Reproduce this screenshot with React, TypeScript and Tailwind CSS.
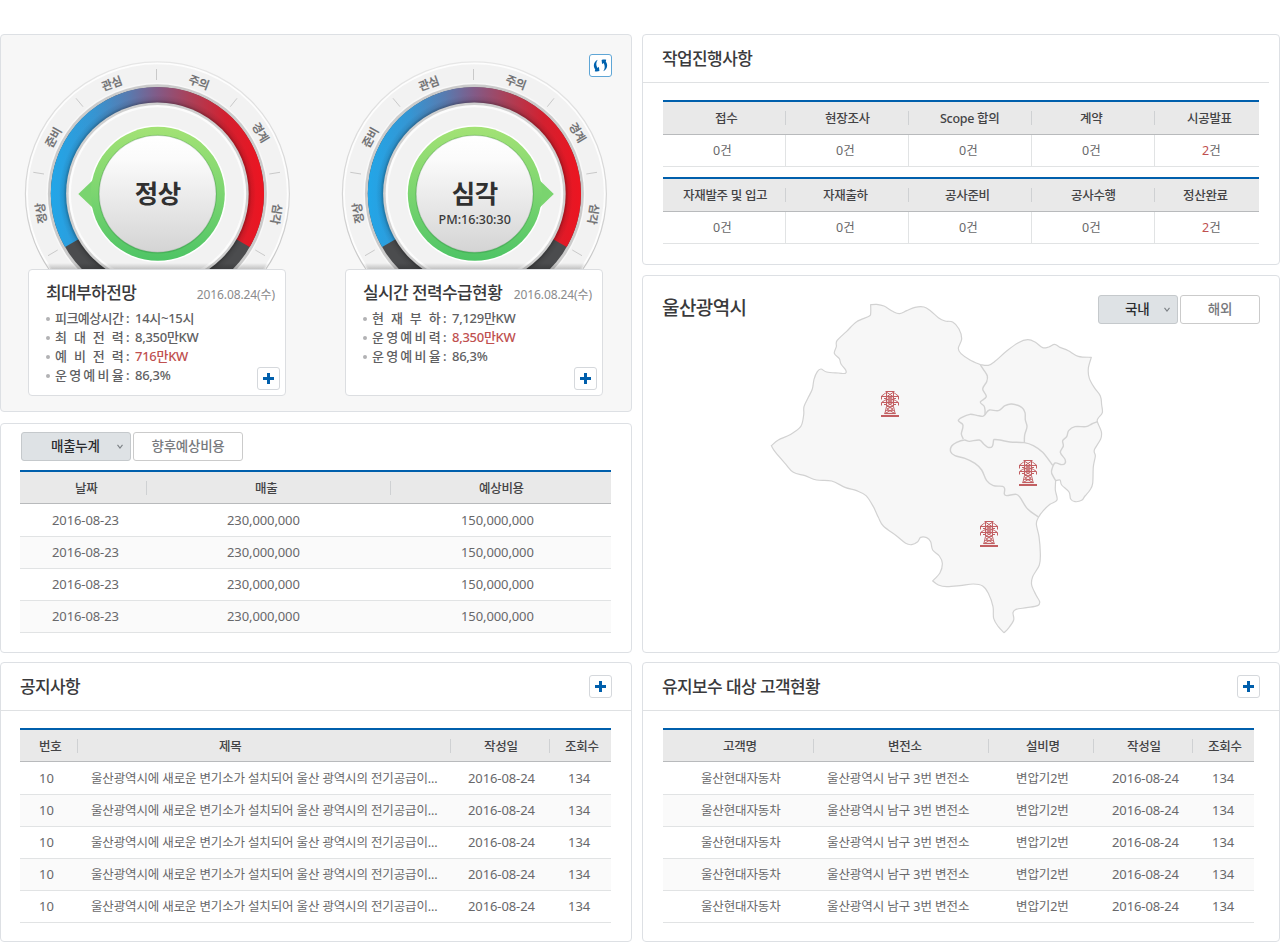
import React from "react";

type Pt = [number, number];

const PANEL = "rounded-[4px] border border-[#dde0e4] bg-white";

/* ---------- small pieces ---------- */

function PlusButton({ className = "" }: { className?: string }) {
  return (
    <button
      className={`flex h-[23px] w-[23px] items-center justify-center rounded-[3px] border border-[#d5d8dc] bg-white ${className}`}
    >
      <svg width="11" height="11" viewBox="0 0 11 11" shapeRendering="crispEdges">
        <path d="M4 0h3v4h4v3H7v4H4V7H0V4h4z" fill="#005fac" />
      </svg>
    </button>
  );
}

function RefreshButton() {
  return (
    <button className="flex h-[23px] w-[23px] shrink-0 items-center justify-center rounded-[3px] border border-[#5fa6d6] bg-white">
      <svg width="15" height="15" viewBox="0 0 15 15" fill="#0062ae">
        <path d="M4.800 1.800C.400 3.600-.100 8.700 2.200 11.300L1.800 13.300C3.500 13.600 5.200 13.500 6.400 13L5.900 8.800 4.600 9.900C2.900 7.800 2.800 4.300 4.800 1.800z" />
        <path d="M10.200 13.200C14.600 11.400 15.100 6.300 12.800 3.700L13.200 1.700C11.500 1.400 9.800 1.500 8.600 2L9.100 6.200 10.400 5.100C12.100 7.200 12.200 10.700 10.200 13.200z" />
      </svg>
    </button>
  );
}

function Toggle({ on, off, width, onPad }: { on: string; off: string; width: string; onPad: string }) {
  return (
    <div className="flex gap-[2px] text-[13.5px] leading-none font-medium tracking-[-0.25px]">
      <button className={`${width} ${onPad} flex h-[29px] items-center justify-between rounded-[3px] border border-[#c5c9cc] bg-[#dee2e5] pr-[7px] text-[#2a2c2f]`}>
        <span>{on}</span>
        <svg width="6" height="5" viewBox="0 0 6 5" fill="none" stroke="#7c8085" strokeWidth="1.1">
          <path d="M.5.8 3 4 5.500.8" />
        </svg>
      </button>
      <button className={`${width} flex h-[29px] items-center justify-center rounded-[3px] border border-[#cbcbcb] bg-white text-[#77797d]`}>
        {off}
      </button>
    </div>
  );
}

/* ---------- gauges ---------- */

const CX = 157.4;
const CY = 193.8;

const TICKS: [number, number, number, number][] = [
  [156.5, 69, 156.5, 80],
  [76, 98.3, 83, 106.7],
  [33.3, 172.3, 44, 174],
  [48, 255.7, 57.7, 250],
  [237, 98.3, 230.3, 106.7],
  [280, 172.3, 269.3, 174],
  [265, 255.7, 255.3, 250],
];

const LABELS: [string, number, number, number][] = [
  ["정상", 41, 213.3, -99],
  ["준비", 53.2, 137.3, -61],
  ["관심", 111.7, 83.5, -20],
  ["주의", 199, 82.3, 20],
  ["경계", 260.5, 132.3, 59],
  ["심각", 276.5, 214, 99],
];

function Gauge({ id, label, time, pointer }: { id: string; label: string; time?: string; pointer: "left" | "right" }) {
  return (
    <svg className="-mx-[5px] block" width="268" height="210" viewBox="23 59 268 210">
      <defs>
        <linearGradient id={`${id}-scale`} gradientUnits="userSpaceOnUse" x1="51" y1="0" x2="265" y2="0">
          <stop offset="0" stopColor="#22a6e8" />
          <stop offset="0.2" stopColor="#3695d2" />
          <stop offset="0.36" stopColor="#587bb0" />
          <stop offset="0.5" stopColor="#835a86" />
          <stop offset="0.65" stopColor="#ab4058" />
          <stop offset="0.82" stopColor="#d3202f" />
          <stop offset="1" stopColor="#ee1420" />
        </linearGradient>
        <linearGradient id={`${id}-green`} x1="0" y1="0" x2="0" y2="1">
          <stop offset="0" stopColor="#a3e275" />
          <stop offset="0.5" stopColor="#7bd570" />
          <stop offset="1" stopColor="#4ec465" />
        </linearGradient>
        <linearGradient id={`${id}-face`} x1="0" y1="0" x2="0" y2="1">
          <stop offset="0" stopColor="#ffffff" />
          <stop offset="0.2" stopColor="#fbfbfb" />
          <stop offset="1" stopColor="#d4d4d4" />
        </linearGradient>
        <linearGradient id={`${id}-rim`} x1="0" y1="0" x2="0" y2="1">
          <stop offset="0" stopColor="#e6e6e6" />
          <stop offset="0.6" stopColor="#d2d2d2" />
          <stop offset="1" stopColor="#b8b8b8" />
        </linearGradient>
        <linearGradient id={`${id}-edge`} x1="0" y1="0" x2="0" y2="1">
          <stop offset="0" stopColor="#000" stopOpacity="0" />
          <stop offset="1" stopColor="#000" stopOpacity="0.28" />
        </linearGradient>
        <radialGradient id={`${id}-inset`} gradientUnits="userSpaceOnUse" cx={CX} cy={CY} r="107">
          <stop offset="0.85" stopColor="#000" stopOpacity="0.3" />
          <stop offset="0.88" stopColor="#000" stopOpacity="0.08" />
          <stop offset="0.92" stopColor="#000" stopOpacity="0" />
        </radialGradient>
        <clipPath id={`${id}-clip`}>
          <circle cx={CX} cy={CY} r="131" />
        </clipPath>
      </defs>

      <circle cx={CX} cy={CY} r="132" fill="#fdfdfd" stroke={`url(#${id}-rim)`} strokeWidth="1.2" />
      <circle cx={CX} cy={CY} r="129.500" fill="#f2f2f2" />
      <circle cx={CX} cy={CY} r="111" fill="#f8f8f8" />
      <circle cx={CX} cy={CY} r="109.500" fill="#cbcbcb" />
      <circle cx={CX} cy={CY} r="106.600" fill="#4b4c4e" />
      <path d={`M${CX} ${CY}L65.100 247A106.600 106.600 0 1 1 249.700 247Z`} fill={`url(#${id}-scale)`} />
      <circle cx={CX} cy={CY} r="106.600" fill={`url(#${id}-inset)`} />
      <circle cx={CX} cy={CY} r="91.300" fill="#d0d0d0" />
      <circle cx={CX} cy={CY} r="88.800" fill="#fcfcfc" />
      <circle cx={CX} cy={CY} r="86.500" fill="#f2f2f2" />

      {TICKS.map(([x1, y1, x2, y2], i) => (
        <line key={i} x1={x1} y1={y1} x2={x2} y2={y2} stroke="#c9c9c9" strokeWidth="1" />
      ))}
      {LABELS.map(([t, x, y, r]) => (
        <text
          key={t}
          transform={`translate(${x} ${y}) rotate(${r})`}
          textAnchor="middle"
          y="4.300"
          fontSize="11.500"
          fontWeight="500"
          letterSpacing="-0.3"
          fill="#6d6d6f"
          stroke="#6d6d6f"
          strokeWidth="0.25"
        >
          {t}
        </text>
      ))}

      <circle cx={CX + 0.4} cy={CY} r="68.500" fill="#fff" />
      {pointer === "left" ? (
        <path d="M78.300 194 93 180V208Z" fill="#7ad46f" />
      ) : (
        <path d="M236.800 194 222.300 180V208Z" fill="#7ad46f" />
      )}
      <circle cx={CX + 0.4} cy={CY} r="67" fill={`url(#${id}-green)`} />
      <circle cx={CX + 0.2} cy={CY + 0.300} r="59.300" fill="#1f7a35" fillOpacity="0.25" />
      <circle cx={CX + 0.2} cy={CY} r="58.400" fill={`url(#${id}-face)`} stroke="#6b8f6b" strokeOpacity="0.35" strokeWidth="0.7" />
      <text x={CX + 0.300} y="202.500" textAnchor="middle" fontSize="25.500" fontWeight="700" letterSpacing="-0.500" fill="#303030">
        {label}
      </text>
      {time && (
        <text x={CX + 0.300} y="223.500" textAnchor="middle" fontSize="12.500" fontWeight="500" fill="#3a3a3a">
          {time}
        </text>
      )}
      <rect x="29" y="263" width="257" height="6" fill={`url(#${id}-edge)`} fillOpacity="0.700" clipPath={`url(#${id}-clip)`} />
    </svg>
  );
}

type Stat = { label: string; value: string; hot?: boolean };

function StatCard({ title, date, rows }: { title: string; date: string; rows: Stat[] }) {
  return (
    <div className="flex h-[127px] w-[258px] flex-col rounded-[4px] border border-[#dcdee1] bg-white">
      <div className="flex h-[39px] items-center justify-between pt-[6px] pr-[10px] pl-[17px]">
        <h3 className="text-[17px] leading-none font-medium tracking-[-0.6px] whitespace-nowrap text-[#3a3a3c]">{title}</h3>
        <span className="pt-[5px] text-[12px] leading-none tracking-[-0.1px] text-[#8a8a8c]">{date}</span>
      </div>
      <div className="flex min-h-0 flex-1 justify-between pr-[5px] pl-[17px]">
        <ul className="text-[13px] leading-none font-medium text-[#606062]">
          {rows.map((r) => (
            <li key={r.label} className="flex h-[19px] items-center">
              <span className="mr-[5px] h-[4px] w-[4px] rounded-full bg-[#b2b2b4]" />
              <span className="flex w-[68px] justify-between tracking-[-0.6px]">
                {r.label.split("").map((c, i) => (
                  <span key={i}>{c}</span>
                ))}
              </span>
              <span className="w-[12px] pl-[3px]">:</span>
              <span className={r.hot ? "tracking-[-0.28px] text-[#c0504f]" : "tracking-[-0.28px]"}>{r.value}</span>
            </li>
          ))}
        </ul>
        <PlusButton className="mb-[5px] self-end" />
      </div>
    </div>
  );
}

/* ---------- tables ---------- */

type Col = { w: string; head: string; headPad: string; bodyPad: string; body: string };

function DataTable({ cols, count }: { cols: Col[]; count: number }) {
  return (
    <div className="w-[591px] text-[13px] leading-none">
      <div className="flex h-[34px] border-t-2 border-b border-t-[#005fac] border-b-[#b8babc] bg-[#e9e9e9] text-[12.5px] font-medium tracking-[-0.3px] text-[#434345]">
        {cols.map((c, i) => (
          <div key={c.head} className={`${c.w} ${c.headPad} flex items-center whitespace-nowrap`}>
            <span className="pt-[3px] pl-px">{c.head}</span>
            {i < cols.length - 1 && <span className="ml-auto h-[14px] w-px bg-[#cfd1d3]" />}
          </div>
        ))}
      </div>
      {Array.from({ length: count }, (_, r) => (
        <div
          key={r}
          className={`flex items-center border-b border-[#e1e3e4] text-[#68686a] ${r === 0 ? "h-[33px]" : "h-[32px]"} ${r % 2 ? "bg-[#fafafa]" : ""}`}
        >
          {cols.map((c) => (
            <div key={c.head} className={`${c.w} ${c.bodyPad} shrink-0 whitespace-nowrap`}>
              {c.body}
            </div>
          ))}
        </div>
      ))}
    </div>
  );
}

type Step = { name: string; pad: string; n: number; valPad: string };

function StepTable({ steps }: { steps: Step[] }) {
  return (
    <div className="w-[596px] leading-none">
      <div className="flex h-[35px] border-t-2 border-b border-t-[#005fac] border-b-[#b8babc] bg-[#e9e9e9] text-[12.5px] font-medium tracking-[-0.3px] text-[#434345]">
        {steps.map((s, i) => (
          <div key={s.name} className={`${i < 4 ? "w-[123px]" : "w-[104px]"} ${s.pad} flex shrink-0 items-center whitespace-nowrap`}>
            <span className="pt-[2px] pl-px">{s.name}</span>
            {i < 4 && <span className="ml-auto h-[14px] w-px bg-[#cfd1d3]" />}
          </div>
        ))}
      </div>
      <div className="flex h-[32px] border-b border-[#e1e3e4] text-[12.5px] text-[#68686a]">
        {steps.map((s, i) => (
          <div key={s.name} className={`${i < 4 ? "w-[123px] border-r border-[#e1e3e4]" : "w-[104px]"} ${s.valPad} flex shrink-0 items-center`}>
            <span className="pt-[2px] pl-px">
              <span className={s.n ? "text-[#c0504f]" : ""}>{s.n}</span>건
            </span>
          </div>
        ))}
      </div>
    </div>
  );
}

const STEPS_A: Step[] = [
  { name: "접수", pad: "pl-[51px]", n: 0, valPad: "pl-[49px]" },
  { name: "현장조사", pad: "pl-[38px]", n: 0, valPad: "pl-[49px]" },
  { name: "Scope 합의", pad: "pl-[30px]", n: 0, valPad: "pl-[49px]" },
  { name: "계약", pad: "pl-[47px]", n: 0, valPad: "pl-[49px]" },
  { name: "시공발표", pad: "pl-[31px]", n: 2, valPad: "pl-[46px]" },
];

const STEPS_B: Step[] = [
  { name: "자재발주 및 입고", pad: "pl-[19px]", n: 0, valPad: "pl-[49px]" },
  { name: "자재출하", pad: "pl-[36px]", n: 0, valPad: "pl-[49px]" },
  { name: "공사준비", pad: "pl-[35px]", n: 0, valPad: "pl-[49px]" },
  { name: "공사수행", pad: "pl-[38px]", n: 0, valPad: "pl-[49px]" },
  { name: "정산완료", pad: "pl-[27px]", n: 2, valPad: "pl-[46px]" },
];

const SALES: Col[] = [
  { w: "w-[127px]", head: "날짜", headPad: "pl-[54px]", bodyPad: "pl-[32px] tracking-[-0.1px]", body: "2016-08-23" },
  { w: "w-[244px]", head: "매출", headPad: "pl-[107px]", bodyPad: "pl-[80px] tracking-[-0.1px]", body: "230,000,000" },
  { w: "w-[220px]", head: "예상비용", headPad: "pl-[87px]", bodyPad: "pl-[70px] tracking-[-0.1px]", body: "150,000,000" },
];

const NOTICES: Col[] = [
  { w: "w-[58px]", head: "번호", headPad: "pl-[18px]", bodyPad: "pl-[19px]", body: "10" },
  {
    w: "w-[373px]",
    head: "제목",
    headPad: "pl-[140px]",
    bodyPad: "pl-[13px] pt-[2px] text-[12.5px] tracking-[-0.14px]",
    body: "울산광역시에 새로운 변기소가 설치되어 울산 광역시의 전기공급이...",
  },
  { w: "w-[99px]", head: "작성일", headPad: "pl-[32px]", bodyPad: "pl-[17px] tracking-[-0.1px]", body: "2016-08-24" },
  { w: "w-[61px]", head: "조회수", headPad: "pl-[14px]", bodyPad: "pl-[18px]", body: "134" },
];

const CLIENTS: Col[] = [
  { w: "w-[151px]", head: "고객명", headPad: "pl-[59px]", bodyPad: "pl-[38px] pt-[2px] text-[12.5px] tracking-[-0.13px]", body: "울산현대자동차" },
  { w: "w-[175px]", head: "변전소", headPad: "pl-[73px]", bodyPad: "pl-[13px] pt-[2px] text-[12.5px] tracking-[-0.07px]", body: "울산광역시 남구 3번 변전소" },
  { w: "w-[105px]", head: "설비명", headPad: "pl-[36px]", bodyPad: "pl-[27px] pt-[2px] text-[12.5px] tracking-[-0.1px]", body: "변압기2번" },
  { w: "w-[99px]", head: "작성일", headPad: "pl-[32px]", bodyPad: "pl-[18px] tracking-[-0.1px]", body: "2016-08-24" },
  { w: "w-[61px]", head: "조회수", headPad: "pl-[14px]", bodyPad: "pl-[19px]", body: "134" },
];

function PanelHead({ title, action }: { title: string; action?: boolean }) {
  return (
    <div className="flex h-[48px] items-center justify-between border-b border-[#dfe1e3] pr-[19px] pl-[19px]">
      <h2 className="text-[17px] leading-none font-medium tracking-[-0.6px] text-[#3a3a3c]">{title}</h2>
      {action && <PlusButton />}
    </div>
  );
}

/* ---------- map ---------- */

// Catmull-Rom spline through the points, written as cubic segments.
function curve(p: Pt[], move = true): string {
  let d = move ? `M${p[0][0]} ${p[0][1]}` : "";
  for (let i = 0; i < p.length - 1; i++) {
    const a = p[i - 1] ?? p[i];
    const b = p[i];
    const c = p[i + 1];
    const e = p[i + 2] ?? c;
    d += `C${b[0] + (c[0] - a[0]) / 6} ${b[1] + (c[1] - a[1]) / 6} ${c[0] - (e[0] - b[0]) / 6} ${c[1] - (e[1] - b[1]) / 6} ${c[0]} ${c[1]}`;
  }
  return d;
}

const NORTH_WEST: Pt[] = [[332, 44], [350, 43], [372, 48], [398, 64], [418, 71], [440, 62], [465, 52], [492, 51], [512, 63], [535, 83], [555, 93], [578, 96], [597, 117], [605, 147], [595, 175], [603, 191], [630, 210], [661, 224]];
const NORTH_EAST: Pt[] = [[661, 224], [685, 226], [705, 214], [740, 183], [775, 158], [803, 149], [825, 156], [848, 173], [866, 171], [884, 163], [900, 172], [925, 182], [955, 199], [994, 202]];
const EAST: Pt[] = [[994, 202], [985, 235], [988, 265], [1003, 293], [1021, 318], [1025, 345], [1027, 368], [1015, 384], [1012, 395], [1024, 425], [1022, 447], [1003, 480], [1006, 498], [1000, 530], [998, 580], [990, 600], [975, 618], [965, 631], [945, 635], [932, 627], [927, 606], [905, 585], [900, 570], [887, 572]];
const SOUTH_EAST: Pt[] = [[887, 572], [886, 600], [891, 630], [870, 643], [850, 662], [836, 681], [829, 702], [837, 740], [841, 790], [838, 825], [818, 860], [815, 885], [828, 915], [839, 935], [833, 947], [800, 953], [768, 958], [759, 968], [761, 990], [745, 1015], [732, 1028]];
const SOUTH: Pt[] = [[732, 1028], [715, 1010], [701, 985], [699, 950], [685, 910], [668, 888], [640, 882], [600, 887], [560, 890], [535, 885], [518, 873]];
const SOUTH_WEST: Pt[] = [[518, 873], [540, 848], [547, 820], [538, 798], [518, 780], [512, 755], [500, 743], [482, 742], [473, 755], [455, 764], [437, 760], [410, 738], [370, 708], [355, 682], [340, 650], [318, 617], [290, 602], [255, 592], [215, 573], [170, 570], [135, 557], [100, 547], [75, 520], [45, 485], [34, 467]];
const WEST: Pt[] = [[34, 467], [55, 450], [90, 434], [122, 410], [131, 375], [132, 350], [145, 322], [157, 297], [162, 268], [172, 245], [183, 237], [200, 246], [235, 249], [256, 250], [257, 240], [243, 222], [238, 206], [223, 190], [229, 170], [231, 152], [260, 124], [290, 95], [327, 79], [332, 70], [332, 44]];

const LAND = [NORTH_WEST, NORTH_EAST, EAST, SOUTH_EAST, SOUTH, SOUTH_WEST, WEST].map((s, i) => curve(s, i === 0)).join("") + "Z";

const BORDERS: Pt[][] = [
  [[661, 224], [670, 238], [682, 258], [680, 275], [668, 297], [679, 320], [661, 336], [672, 348], [675, 360], [675, 374]],
  [[675, 374], [668, 379], [650, 376], [630, 373], [606, 382], [595, 392], [608, 403], [608, 415], [604, 432], [610, 447]],
  [[675, 374], [688, 360], [715, 362], [735, 347], [755, 342], [785, 352], [795, 368], [796, 390], [801, 410], [794, 435], [793, 458]],
  [[836, 681], [803, 657], [780, 622], [768, 613], [740, 617], [733, 612], [734, 597], [728, 589], [700, 587], [680, 572], [665, 540], [645, 520], [615, 505], [585, 497], [572, 485], [575, 468], [590, 457], [613, 450], [628, 454], [658, 450], [672, 463], [684, 472], [697, 469], [701, 448]],
  [[701, 448], [720, 450], [750, 456], [793, 458], [820, 467], [848, 487], [878, 526]],
  [[1012, 395], [995, 402], [978, 410], [945, 410], [926, 422], [920, 440], [908, 452], [910, 468], [901, 487], [915, 508], [915, 520], [905, 524], [885, 519], [876, 537], [875, 550], [887, 572]],
];

const TOWERS: Pt[] = [[363, 303], [777, 510], [660, 693]];

function RegionMap() {
  return (
    <svg width="345" height="350" viewBox="0 0 1035 1050" className="-mr-[20px] shrink-0">
      <path d={LAND} fill="#f7f7f7" stroke="#d2d2d2" strokeWidth="3.600" strokeLinejoin="round" />
      {BORDERS.map((b, i) => (
        <path key={i} d={curve(b)} fill="none" stroke="#d2d2d2" strokeWidth="4.200" strokeLinejoin="round" />
      ))}
      {TOWERS.map(([x, y], i) => (
        <g key={i} transform={`translate(${x} ${y}) scale(3)`} fill="none" stroke="#c25f62" strokeWidth="1">
          <path d="M4.500 .500h9" />
          <path d="M5.500 1v14.500L3.800 23M12.500 1v14.500L14.200 23" />
          <path d="M5 1.500 3.500 3 .500 5v3.500M13 1.500 14.500 3l3 2v3.500M1 5.500h16M3 7.500h3M12 7.500h3" />
          <path d="M5.500 8.500 3.500 9.500.500 11.500v3M12.500 8.500l2 1 3 2v3M1 11.500h16M3 13.500h3M12 13.500h3" />
          <path d="m6 1.500 6 4-6 3 6 3-6 3.500 6 3-7 4M12 1.500l-6 4 6 3-6 3 6 3.500-6 3 7 4" />
          <path d="M6 8.500h6M6 15.500h6M5 19.500h8" strokeWidth=".8" />
          <path d="M3.500 22.500h11" strokeWidth="1.200" />
          <path d="M0 25h18" strokeWidth="2" />
        </g>
      ))}
    </svg>
  );
}

/* ---------- page ---------- */

export default function App() {
  return (
    <div className="flex h-[942px] w-[1280px] gap-[10px] bg-white pt-[34px] font-['Noto_Sans','Noto_Sans_CJK_KR',sans-serif]">
      <div className="flex w-[632px] flex-col">
        <section className="flex h-[378px] rounded-[4px] border border-[#dde0e4] bg-[#f7f7f7] pl-[27px]">
          <div className="w-[258px] pt-[24px]">
            <Gauge id="peak" label="정상" pointer="left" />
            <StatCard
              title="최대부하전망"
              date="2016.08.24(수)"
              rows={[
                { label: "피크예상시간", value: "14시~15시" },
                { label: "최대전력", value: "8,350만KW" },
                { label: "예비전력", value: "716만KW", hot: true },
                { label: "운영예비율", value: "86,3%" },
              ]}
            />
          </div>
          <div className="ml-[59px] w-[258px] pt-[24px]">
            <Gauge id="live" label="심각" time="PM:16:30:30" pointer="right" />
            <StatCard
              title="실시간 전력수급현황"
              date="2016.08.24(수)"
              rows={[
                { label: "현재부하", value: "7,129만KW" },
                { label: "운영예비력", value: "8,350만KW", hot: true },
                { label: "운영예비율", value: "86,3%" },
              ]}
            />
          </div>
          <div className="-ml-[14px] pt-[19px]">
            <RefreshButton />
          </div>
        </section>

        <section className={`${PANEL} mt-[11px] h-[230px] pt-[8px] pl-[19px]`}>
          <div className="pl-[1px]">
            <Toggle on="매출누계" off="향후예상비용" width="w-[110px]" onPad="pl-[29px]" />
          </div>
          <div className="pt-[9px]">
            <DataTable cols={SALES} count={4} />
          </div>
        </section>

        <section className={`${PANEL} mt-[9px] h-[280px]`}>
          <PanelHead title="공지사항" action />
          <div className="pt-[17px] pl-[19px]">
            <DataTable cols={NOTICES} count={5} />
          </div>
        </section>
      </div>

      <div className="flex w-[638px] flex-col">
        <section className={`${PANEL} h-[231px]`}>
          <div className="mr-[10px]">
            <PanelHead title="작업진행사항" />
          </div>
          <div className="flex flex-col gap-[10px] pt-[17px] pl-[20px]">
            <StepTable steps={STEPS_A} />
            <StepTable steps={STEPS_B} />
          </div>
        </section>

        <section className={`${PANEL} mt-[10px] flex h-[378px] items-start pt-[14px] pr-[19px] pl-[19px]`}>
          <h2 className="w-[98px] shrink-0 pt-[9px] text-[19px] leading-none font-medium tracking-[-0.6px] text-[#3a3a3c]">울산광역시</h2>
          <RegionMap />
          <div className="ml-auto pt-[5px]">
            <Toggle on="국내" off="해외" width="w-[80px]" onPad="pl-[26px]" />
          </div>
        </section>

        <section className={`${PANEL} mt-[9px] h-[280px]`}>
          <PanelHead title="유지보수 대상 고객현황" action />
          <div className="pt-[17px] pl-[20px]">
            <DataTable cols={CLIENTS} count={5} />
          </div>
        </section>
      </div>
    </div>
  );
}
